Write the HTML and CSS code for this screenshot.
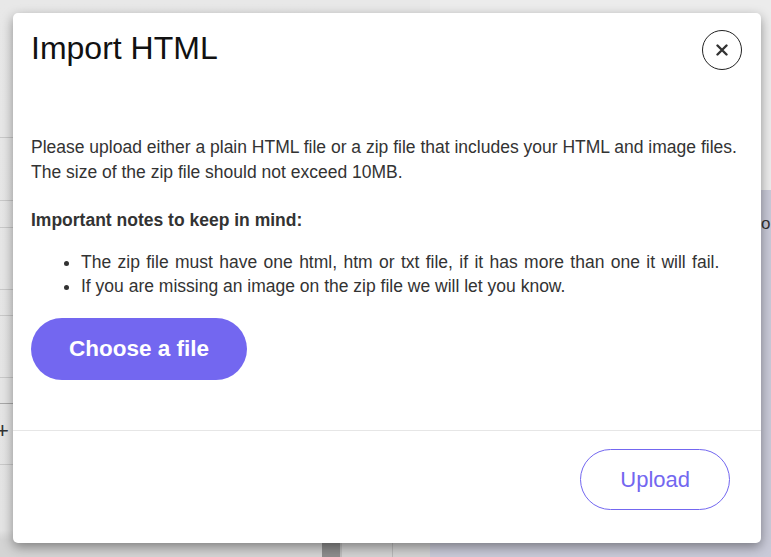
FILE: index.html
```html
<!DOCTYPE html>
<html lang="en">
<head>
<meta charset="utf-8">
<title>Import HTML</title>
<link rel="stylesheet" href="styles.css">
</head>
<body>
<div class="page">
  <div class="sidebar">
    <div class="row r1"></div>
    <div class="row r2"></div>
    <div class="row r3"></div>
    <div class="row r4"></div>
    <div class="row r5"></div>
    <div class="row r6"></div>
    <div class="row r7"></div>
    <div class="row r8"><span class="plus">+</span></div>
  </div>
  <div class="col thumb"><div class="col-bottom thumb-bottom"></div></div>
  <div class="col midcol"><div class="col-bottom mid-bottom"><div class="mid-cell"></div></div></div>
  <div class="main">
    <div class="main-top"></div>
    <div class="main-rest"><span class="or">or</span></div>
  </div>
</div>

<div class="modal" role="dialog">
  <div class="modal-header">
    <h1 class="modal-title">Import HTML</h1>
    <button class="close-btn" aria-label="Close">
      <svg width="12" height="12" viewBox="0 0 12 12"><path d="M1.5 1.5 L10.5 10.5 M10.5 1.5 L1.5 10.5" stroke="#333" stroke-width="2.4" stroke-linecap="round" fill="none"/></svg>
    </button>
  </div>
  <div class="modal-body">
    <p class="intro">Please upload either a plain HTML file or a zip file that includes your HTML and image files. The size of the zip file should not exceed 10MB.</p>
    <p class="notes-title">Important notes to keep in mind:</p>
    <ul class="notes">
      <li>The zip file must have one html, htm or txt file, if it has more than one it will fail.</li>
      <li>If you are missing an image on the zip file we will let you know.</li>
    </ul>
    <button class="choose-btn">Choose a file</button>
  </div>
  <div class="modal-footer">
    <button class="upload-btn">Upload</button>
  </div>
</div>
</body>
</html>
```

FILE: styles.css
```css
html, body {
  margin: 0;
  padding: 0;
}
body {
  width: 771px;
  height: 557px;
  overflow: hidden;
  background: #e6e6e6;
  font-family: "Liberation Sans", Arial, sans-serif;
}
.page {
  display: grid;
  grid-template-columns: 322px 20px 88px 1fr;
  height: 557px;
}
.sidebar {
  background: linear-gradient(to bottom, #e8e8e8 0, #e4e4e4 530px, #d4d4d4 540px);
  display: flex;
  flex-direction: column;
}
.row {
  border-bottom: 1px solid #c9c9c9;
  position: relative;
}
.r1 { height: 137px; }
.r2 { height: 62px; }
.r3 { height: 26px; }
.r4 { height: 61px; }
.r5 { height: 25px; }
.r6 { height: 61px; }
.r7 { height: 25px; border-bottom-color: #a8a8a8; }
.r8 { height: 60px; }
.plus {
  position: absolute;
  left: -4px;
  top: 16px;
  font-size: 22px;
  line-height: 22px;
  color: #333;
}
.col {
  background: #e8e8e8;
  display: flex;
  flex-direction: column;
}
.col-bottom {
  margin-top: 530px;
  flex: 1;
}
.thumb-bottom {
  background: #8d8d8d;
  border-right: 2px solid #bdbdbd;
}
.mid-bottom {
  background: #d2d2d2;
  display: flex;
  padding-left: 50px;
}
.mid-cell {
  flex: 1;
  border-left: 1px solid #b8b8b8;
}
.main {
  display: flex;
  flex-direction: column;
}
.main-top { height: 190px; background: #ececec; }
.main-rest {
  flex: 1;
  background: #c9cad8;
  padding-top: 24px;
  padding-left: 331px;
}
.or {
  font-size: 17px;
  color: #333;
}

.modal {
  position: absolute;
  left: 13px;
  top: 13px;
  width: 748px;
  height: 530px;
  background: #fff;
  border-radius: 5px;
  box-shadow: 0 4px 12px rgba(0, 0, 0, 0.4);
  display: flex;
  flex-direction: column;
  box-sizing: border-box;
}
.modal-header {
  display: flex;
  justify-content: space-between;
  align-items: flex-start;
  padding: 17px 19px 0 18px;
}
.modal-title {
  margin: 0;
  font-size: 32px;
  font-weight: 400;
  line-height: 37px;
  color: #111;
}
.close-btn {
  width: 40px;
  height: 40px;
  border: 1px solid #222;
  border-radius: 50%;
  background: #fff;
  padding: 0;
  display: flex;
  align-items: center;
  justify-content: center;
}
.modal-body {
  flex: 1;
  padding: 65px 18px 0 18px;
  color: #333;
  font-size: 17.5px;
  line-height: 24.5px;
}
.intro {
  margin: 0 0 24px 0;
}
.notes-title {
  margin: 0 0 17px 0;
  font-weight: 700;
}
.notes {
  margin: 0 0 19px 0;
  padding-left: 50px;
}
.notes li:first-child {
  word-spacing: 1.5px;
}
.choose-btn {
  display: block;
  height: 62px;
  padding: 0 38px;
  border: none;
  border-radius: 31px;
  background: #7367f0;
  color: #fff;
  font-family: "Liberation Sans", Arial, sans-serif;
  font-size: 22.5px;
  font-weight: 700;
}
.modal-footer {
  border-top: 1px solid #e6e6e6;
  display: flex;
  justify-content: flex-end;
  padding: 18px 31px 33px 18px;
}
.upload-btn {
  height: 61px;
  padding: 0 39px;
  border: 1px solid #7367f0;
  border-radius: 31px;
  background: #fff;
  color: #7367f0;
  font-family: "Liberation Sans", Arial, sans-serif;
  font-size: 22px;
}
```
